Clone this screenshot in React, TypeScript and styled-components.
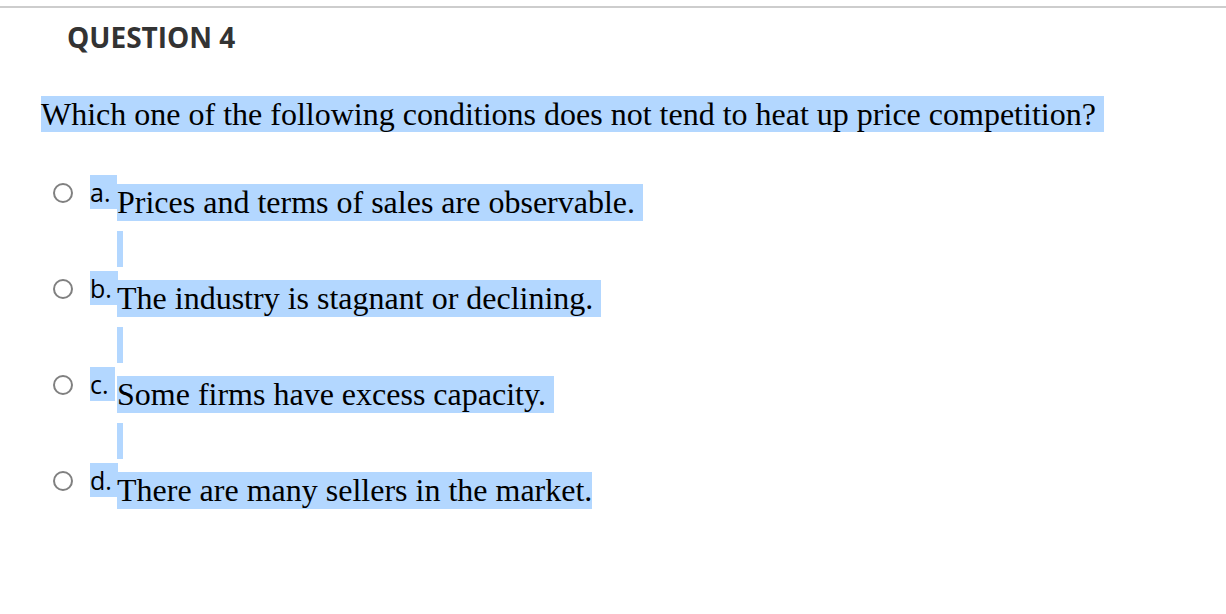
import React from 'react';
import styled, { createGlobalStyle } from 'styled-components';

const GlobalStyle = createGlobalStyle`
  html, body {
    margin: 0;
    padding: 0;
    background: #ffffff;
  }
`;

const selection = '#b3d7ff';

interface Choice {
  key: string;
  text: string;
  trailing: boolean;
}

const choices: Choice[] = [
  { key: 'a', text: 'Prices and terms of sales are observable.', trailing: true },
  { key: 'b', text: 'The industry is stagnant or declining.', trailing: true },
  { key: 'c', text: 'Some firms have excess capacity.', trailing: true },
  { key: 'd', text: 'There are many sellers in the market.', trailing: false },
];

const App: React.FC = () => {
  return (
    <Page>
      <GlobalStyle />
      <TopRule />
      <Heading>QUESTION 4</Heading>
      <Prompt>
        <Selected size={36}>
          Which one of the following conditions does not tend to heat up price competition?{'\u00a0'}
        </Selected>
      </Prompt>

      <ChoiceList>
        {choices.map((c) => (
          <ChoiceRow key={c.key}>
            <Radio role="radio" aria-checked="false" aria-label={`option ${c.key}`} />
            <LabelCell>
              <Letter>{c.key}.{'\u00a0'}</Letter>
            </LabelCell>
            <TextCell>
              <Selected size={37}>
                {c.text}
                {c.trailing ? '\u00a0' : ''}
              </Selected>
              {c.trailing && <NewlineMark />}
            </TextCell>
          </ChoiceRow>
        ))}
      </ChoiceList>
    </Page>
  );
};

const Page = styled.div`
  width: 100%;
  min-height: 614px;
  background: #ffffff;
`;

const TopRule = styled.div`
  height: 2px;
  margin-top: 6px;
  background: #cdcdcd;
`;

const Heading = styled.h2`
  margin: 10px 0 0 67px;
  font-family: 'Open Sans', 'Liberation Sans', sans-serif;
  font-weight: 700;
  font-size: 28px;
  line-height: 38px;
  color: #333333;
`;

const Prompt = styled.div`
  margin: 40px 0 0 41px;
`;

const Selected = styled.span<{ size: number }>`
  display: inline-block;
  background: ${selection};
  color: #000000;
  font-family: 'Liberation Serif', 'Times New Roman', serif;
  font-size: 32px;
  line-height: ${(props) => props.size}px;
  height: ${(props) => props.size}px;
  white-space: nowrap;
`;

const ChoiceList = styled.div`
  margin-top: 43px;
  display: flex;
  flex-direction: column;
  gap: 4px;
`;

const ChoiceRow = styled.div`
  display: flex;
  align-items: flex-start;
  padding-left: 53px;
`;

const Radio = styled.span`
  display: block;
  box-sizing: border-box;
  flex: none;
  width: 20px;
  height: 20px;
  margin-top: 8px;
  border: 2px solid #808080;
  border-radius: 50%;
  background: #ffffff;
  cursor: pointer;
`;

const LabelCell = styled.div`
  flex: none;
  width: 27px;
  margin-left: 17px;
  overflow: visible;
`;

const Letter = styled.span`
  display: inline-block;
  background: ${selection};
  color: #000000;
  font-family: 'Open Sans', 'Liberation Sans', sans-serif;
  font-size: 25px;
  line-height: 34px;
  height: 34px;
  white-space: nowrap;
`;

const TextCell = styled.div`
  display: flex;
  flex-direction: column;
  align-items: flex-start;
  margin-top: 9px;
  min-height: 83px;
`;

const NewlineMark = styled.span`
  display: block;
  width: 6px;
  height: 36px;
  margin-top: 10px;
  background: ${selection};
`;

export default App;
